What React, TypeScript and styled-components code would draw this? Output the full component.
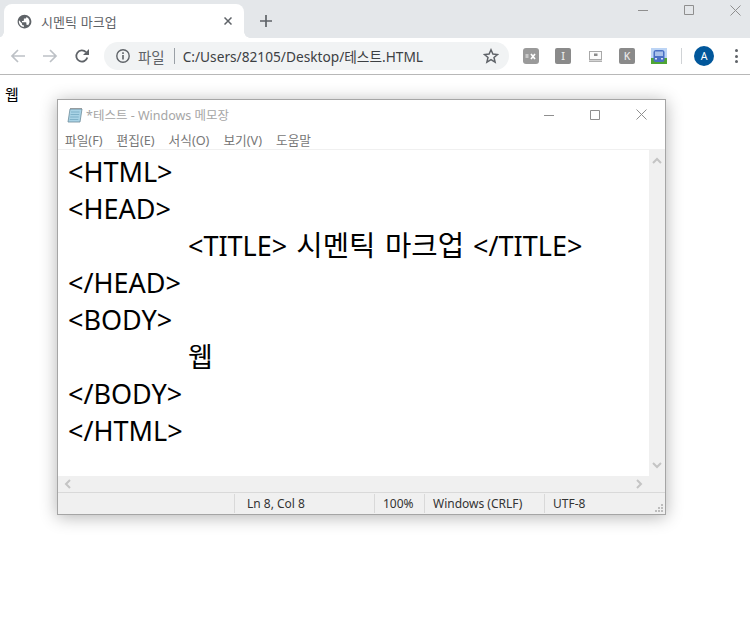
import { createGlobalStyle } from 'styled-components'
import styled from 'styled-components'

const uiFont = `'Noto Sans', 'Noto Sans CJK KR', sans-serif`

const GlobalStyle = createGlobalStyle`
	html, body {
		margin: 0;
		padding: 0;
		background: #fff;
	}
	body {
		width: 750px;
		height: 635px;
		overflow: hidden;
		font-family: ${uiFont};
	}
`

const Page = styled.div`
	position: relative;
	width: 750px;
	height: 635px;
	overflow: hidden;
`

const TabStrip = styled.div`
	display: flex;
	align-items: flex-end;
	height: 38px;
	background: #e4e7ea;
	padding-left: 4px;
`

const Tab = styled.div`
	position: relative;
	display: flex;
	align-items: center;
	width: 240px;
	height: 34px;
	box-sizing: border-box;
	padding: 0 12px 0 13px;
	background: #fff;
	border-radius: 8px 8px 0 0;

	&::before,
	&::after {
		content: '';
		position: absolute;
		bottom: 0;
		width: 6px;
		height: 6px;
	}
	&::before {
		left: -6px;
		background: radial-gradient(circle at 0 0, #e4e7ea 5.5px, #fff 6px);
	}
	&::after {
		right: -6px;
		background: radial-gradient(circle at 100% 0, #e4e7ea 5.5px, #fff 6px);
	}
`

const TabTitle = styled.span`
	flex: 1;
	margin-left: 9px;
	font-size: 13px;
	color: #5f6368;
	letter-spacing: 0.1px;
`

const NewTab = styled.div`
	display: flex;
	align-items: center;
	justify-content: center;
	width: 44px;
	height: 34px;
`

const WindowControls = styled.div`
	margin-left: auto;
	margin-right: -8px;
	align-self: flex-start;
	display: flex;
`

const ControlSlot = styled.div`
	display: flex;
	align-items: center;
	justify-content: center;
	width: 46px;
	height: 20px;
`

const Toolbar = styled.div`
	display: flex;
	align-items: center;
	height: 36px;
	background: #fff;
	border-bottom: 1px solid #b8b8b8;
`

const NavButton = styled.div`
	display: flex;
	align-items: center;
	justify-content: center;
	width: 32px;
	height: 32px;
`

const NavGroup = styled.div`
	display: flex;
	padding-left: 2px;
	width: 104px;
	box-sizing: border-box;
`

const Omnibox = styled.div`
	display: flex;
	align-items: center;
	width: 405px;
	height: 28px;
	box-sizing: border-box;
	padding: 0 10px 0 11px;
	border-radius: 14px;
	background: #f1f3f4;
	font-size: 14.5px;
`

const Scheme = styled.span`
	margin-left: 7px;
	color: #5f6368;
`

const SchemeDivider = styled.span`
	width: 1px;
	height: 16px;
	margin: 0 8px 0 9px;
	background: #9aa0a6;
`

const Address = styled.span`
	flex: 1;
	color: #3c4043;
	font-size: 13.7px;
	white-space: nowrap;
`

const Extensions = styled.div`
	display: flex;
	align-items: center;
	flex: 1;
	padding-left: 14px;
`

const ExtSlot = styled.div`
	display: flex;
	align-items: center;
	justify-content: center;
	width: 16px;
	height: 16px;
	margin-right: 16px;
`

const ExtBadge = styled.div`
	display: flex;
	align-items: center;
	justify-content: center;
	width: 16px;
	height: 16px;
	border-radius: 2px;
	background: #8a8a8a;
	color: #e8e8e8;
	font-size: 10.5px;
	font-weight: 500;
	line-height: 16px;
`

const ToolbarDivider = styled.div`
	width: 1px;
	height: 16px;
	margin: 0 12px 0 -2px;
	background: #d0d3d6;
`

const Avatar = styled.div`
	display: flex;
	align-items: center;
	justify-content: center;
	width: 20px;
	height: 20px;
	border-radius: 50%;
	background: #01579b;
	color: #fff;
	font-size: 10.5px;
`

const Kebab = styled.div`
	display: flex;
	flex-direction: column;
	gap: 2.5px;
	margin-left: 21px;
`

const Dot = styled.span`
	width: 3px;
	height: 3px;
	border-radius: 50%;
	background: #5f6368;
`

const PageBody = styled.div`
	padding: 8px 5px;
	font-size: 15px;
	line-height: 22px;
	color: #000;
	font-family: 'Noto Sans CJK KR', sans-serif;
`

const Notepad = styled.div`
	position: absolute;
	left: 57px;
	top: 99px;
	width: 609px;
	height: 416px;
	box-sizing: border-box;
	display: flex;
	flex-direction: column;
	background: #fff;
	border: 1px solid #a5a5a5;
	box-shadow: 0 2px 16px rgba(0, 0, 0, 0.3);
`

const TitleBar = styled.div`
	display: flex;
	align-items: center;
	height: 29px;
	padding-left: 9px;
`

const TitleText = styled.span`
	flex: 1;
	margin-left: 3px;
	font-size: 12.5px;
	color: #a6a6a6;
`

const NotepadControls = styled.div`
	display: flex;
	padding-right: 1px;
`

const MenuBar = styled.div`
	display: flex;
	gap: 14px;
	height: 20px;
	align-items: center;
	padding-left: 7px;
	font-size: 12.7px;
	color: #777;
	border-bottom: 1px solid #f0f0f0;
`

const Middle = styled.div`
	display: flex;
	flex: 1;
	min-height: 0;
`

const Editor = styled.pre`
	flex: 1;
	margin: 0;
	padding: 3px 0 0 10px;
	font-family: 'Noto Sans', 'Noto Sans CJK KR', sans-serif;
	font-size: 27px;
	line-height: 37px;
	word-spacing: 2px;
	color: #000;
	tab-size: 120px;
	overflow: hidden;
`

const Hangul = styled.span`
	font-size: 28.7px;
	line-height: 1;
`

const VScroll = styled.div`
	display: flex;
	flex-direction: column;
	justify-content: space-between;
	align-items: center;
	width: 16px;
	padding: 6px 0;
	box-sizing: border-box;
	background: #f0f0f0;
`

const HScroll = styled.div`
	display: flex;
	align-items: center;
	justify-content: space-between;
	height: 16px;
	padding: 0 21px 0 5px;
	background: #f0f0f0;
`

const StatusBar = styled.div`
	position: relative;
	display: flex;
	align-items: center;
	height: 22px;
	box-sizing: border-box;
	background: #f0f0f0;
	border-top: 1px solid #d9d9d9;
	font-size: 12px;
	color: #333;
`

const StatusCell = styled.div<{ $w: number; $pad?: number }>`
	display: flex;
	align-items: center;
	width: ${p => p.$w}px;
	height: 19px;
	box-sizing: border-box;
	padding-left: ${p => p.$pad ?? 8}px;
	border-left: 1px solid #d9d9d9;
	white-space: nowrap;
	&:first-child {
		border-left: 0;
	}
`

const Grip = styled.svg`
	position: absolute;
	right: 1px;
	bottom: 1px;
`

const Chevron = ({ d }: { d: string }) => (
	<svg width="10" height="10" viewBox="0 0 10 10">
		<path d={d} fill="none" stroke="#c4c4c4" strokeWidth="2" />
	</svg>
)

const Minimize = () => (
	<svg width="10" height="10" viewBox="0 0 10 10">
		<path d="M0 5.5h10" stroke="#8f8f8f" />
	</svg>
)

const Maximize = () => (
	<svg width="10" height="10" viewBox="0 0 10 10">
		<path d="M.5.5h9v9h-9z" fill="none" stroke="#8f8f8f" />
	</svg>
)

const CloseX = () => (
	<svg width="11" height="11" viewBox="0 0 11 11">
		<path d="M.5.5l10 10M10.5.5l-10 10" stroke="#8f8f8f" />
	</svg>
)

const Globe = () => (
	<svg width="15" height="15" viewBox="0 0 24 24">
		<path
			fill="#5f6368"
			d="M12 1C5.900 1 1 5.900 1 12s4.900 11 11 11 11-4.900 11-11S18.100 1 12 1zm-1 19.900C6.500 20.400 3 16.600 3 12c0-.7.100-1.300.2-2L8 15v1c0 1.100.9 2 2 2h1v2.900zm6.900-2.500c-.3-.8-1-1.400-1.900-1.400h-1v-3c0-.6-.4-1-1-1H8v-2h2c.6 0 1-.4 1-1V7h2c1.100 0 2-.9 2-2v-.4c2.900 1.200 5 4.100 5 7.400 0 2.100-.8 4-2.100 5.400z"
		/>
	</svg>
)

const Back = ({ flip }: { flip?: boolean }) => (
	<svg width="16" height="16" viewBox="0 0 16 16" style={flip ? { transform: 'scaleX(-1)' } : undefined}>
		<path d="M15 8H2.500M8 2L2 8l6 6" fill="none" stroke="#bdc1c6" strokeWidth="1.700" />
	</svg>
)

const Reload = () => (
	<svg width="16" height="16" viewBox="0 0 16 16">
		<path d="M13.300 9.500A5.600 5.600 0 1 1 12 4.200" fill="none" stroke="#5f6368" strokeWidth="1.800" />
		<path d="M15 1v6H9z" fill="#5f6368" />
	</svg>
)

const Info = () => (
	<svg width="16" height="16" viewBox="0 0 16 16">
		<circle cx="8" cy="8" r="6.200" fill="none" stroke="#5f6368" strokeWidth="1.400" />
		<path d="M7.200 7h1.600v4.500H7.200zM7.200 4.300h1.600v1.600H7.200z" fill="#5f6368" />
	</svg>
)

const Star = () => (
	<svg width="16" height="16" viewBox="0 0 16 16">
		<path
			d="M8 1.800l1.900 4.300 4.600.4-3.500 3 1.100 4.600L8 11.700l-4.100 2.400L5 9.500l-3.500-3 4.600-.4z"
			fill="none"
			stroke="#5f6368"
			strokeWidth="1.500"
		/>
	</svg>
)

const Plus = () => (
	<svg width="12" height="12" viewBox="0 0 12 12">
		<path d="M6 0v12M0 6h12" stroke="#5f6368" strokeWidth="1.700" />
	</svg>
)

const TabClose = () => (
	<svg width="8" height="8" viewBox="0 0 8 8">
		<path d="M.5.5l7 7M7.500.5l-7 7" stroke="#5f6368" strokeWidth="1.500" />
	</svg>
)

const ExFinder = () => (
	<svg width="16" height="16" viewBox="0 0 16 16">
		<rect width="16" height="16" rx="3" fill="#9a9a9a" />
		<rect x="2.500" y="6" width="3" height="4" fill="#c8c8c8" />
		<path d="M8 6l4 5M12 6l-4 5" stroke="#fff" strokeWidth="1.700" />
	</svg>
)

const ScreenIcon = () => (
	<svg width="13" height="11" viewBox="0 0 13 11">
		<rect x=".5" y=".5" width="12" height="8" fill="#fbfbfb" stroke="#a8a8a8" />
		<rect x="5" y="2.500" width="3.500" height="2.500" fill="#8a8a8a" />
		<path d="M0 10.200h13" stroke="#a8a8a8" strokeWidth="1.400" />
	</svg>
)

const TrainIcon = () => (
	<svg width="16" height="16" viewBox="0 0 16 16">
		<rect width="16" height="11" fill="#bcd4f5" />
		<rect y="10" width="16" height="6" fill="#4fa534" />
		<rect x="2.500" y="2" width="11" height="12" rx="2.500" fill="#4a70c4" />
		<rect x="4" y="3.500" width="8" height="4.500" fill="#a9c1ea" />
		<rect x="4" y="10" width="2" height="1.500" fill="#dce6f7" />
		<rect x="10" y="10" width="2" height="1.500" fill="#dce6f7" />
	</svg>
)

const NotepadIcon = () => (
	<svg width="16" height="16" viewBox="0 0 16 16">
		<path d="M3 2h12l-2 13H1z" fill="#a9d3e6" stroke="#6d8b99" strokeWidth=".8" />
		<path d="M4 5h8.500M3.600 7.500h8.500M3.200 10h8.500M2.800 12.500h8.500" stroke="#6ea3bb" strokeWidth=".7" />
		<path d="M3.500 1.500h11" stroke="#666" strokeWidth="1.200" strokeDasharray="1 1" />
	</svg>
)

export default function App() {
	return (
		<Page>
			<GlobalStyle />
			<TabStrip>
				<Tab>
					<Globe />
					<TabTitle>시멘틱 마크업</TabTitle>
					<TabClose />
				</Tab>
				<NewTab>
					<Plus />
				</NewTab>
				<WindowControls>
					<ControlSlot>
						<Minimize />
					</ControlSlot>
					<ControlSlot>
						<Maximize />
					</ControlSlot>
					<ControlSlot>
						<CloseX />
					</ControlSlot>
				</WindowControls>
			</TabStrip>
			<Toolbar>
				<NavGroup>
					<NavButton>
						<Back />
					</NavButton>
					<NavButton>
						<Back flip />
					</NavButton>
					<NavButton>
						<Reload />
					</NavButton>
				</NavGroup>
				<Omnibox>
					<Info />
					<Scheme>파일</Scheme>
					<SchemeDivider />
					<Address>C:/Users/82105/Desktop/테스트.HTML</Address>
					<Star />
				</Omnibox>
				<Extensions>
					<ExtSlot>
						<ExFinder />
					</ExtSlot>
					<ExtSlot>
						<ExtBadge>I</ExtBadge>
					</ExtSlot>
					<ExtSlot>
						<ScreenIcon />
					</ExtSlot>
					<ExtSlot>
						<ExtBadge>K</ExtBadge>
					</ExtSlot>
					<ExtSlot>
						<TrainIcon />
					</ExtSlot>
					<ToolbarDivider />
					<Avatar>A</Avatar>
					<Kebab>
						<Dot />
						<Dot />
						<Dot />
					</Kebab>
				</Extensions>
			</Toolbar>
			<PageBody>웹</PageBody>
			<Notepad>
				<TitleBar>
					<NotepadIcon />
					<TitleText>*테스트 - Windows 메모장</TitleText>
					<NotepadControls>
						<ControlSlot>
							<Minimize />
						</ControlSlot>
						<ControlSlot>
							<Maximize />
						</ControlSlot>
						<ControlSlot>
							<CloseX />
						</ControlSlot>
					</NotepadControls>
				</TitleBar>
				<MenuBar>
					<span>파일(F)</span>
					<span>편집(E)</span>
					<span>서식(O)</span>
					<span>보기(V)</span>
					<span>도움말</span>
				</MenuBar>
				<Middle>
					<Editor>
						{'<HTML>\n<HEAD>\n\t<TITLE> '}
						<Hangul>시멘틱 마크업</Hangul>
						{' </TITLE>\n</HEAD>\n<BODY>\n\t웹\n</BODY>\n</HTML>'}
					</Editor>
					<VScroll>
						<Chevron d="M1 7l4-4 4 4" />
						<Chevron d="M1 3l4 4 4-4" />
					</VScroll>
				</Middle>
				<HScroll>
					<Chevron d="M7 1L3 5l4 4" />
					<Chevron d="M3 1l4 4-4 4" />
				</HScroll>
				<StatusBar>
					<StatusCell $w={176} />
					<StatusCell $w={140} $pad={12}>
						Ln 8, Col 8
					</StatusCell>
					<StatusCell $w={50}>100%</StatusCell>
					<StatusCell $w={120}>Windows (CRLF)</StatusCell>
					<StatusCell $w={120}>UTF-8</StatusCell>
					<Grip width="10" height="10" viewBox="0 0 10 10">
						<path d="M7 1h2v2H7zM4 4h2v2H4zM7 4h2v2H7zM1 7h2v2H1zM4 7h2v2H4zM7 7h2v2H7z" fill="#bdbdbd" />
					</Grip>
				</StatusBar>
			</Notepad>
		</Page>
	)
}
